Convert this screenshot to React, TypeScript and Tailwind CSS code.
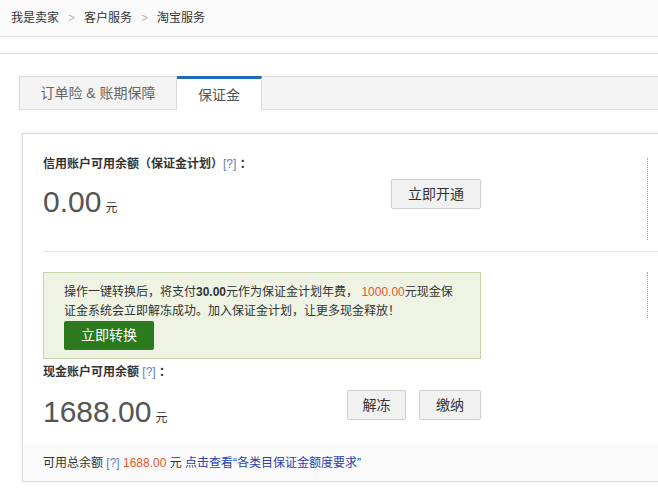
const FONT = "font-['Liberation_Sans','Noto_Sans_CJK_SC',sans-serif]";

const GrayButton = ({ label, width }: { label: string; width: string }) => (
  <button
    className={`${width} h-[30px] border border-[#cfcfcf] bg-[#f1f1f1] rounded-[2px] text-[14px] text-[#333] shadow-[0_0_2px_rgba(0,0,0,0.06)]`}
  >
    {label}
  </button>
);

const Help = () => <span className="text-[#5b82c2] font-normal">[?]</span>;

const App = () => {
  return (
    <div className={`w-[658px] h-[497px] overflow-hidden bg-white text-[#333] ${FONT}`}>
      {/* breadcrumb */}
      <div className="h-[37px] bg-[#fafafa] border-b border-[#e2e2e2] flex items-center pl-[11px] text-[12px]">
        <span>我是卖家</span>
        <span className="mx-[9px] text-[#bbb]">&gt;</span>
        <span>客户服务</span>
        <span className="mx-[9px] text-[#bbb]">&gt;</span>
        <span>淘宝服务</span>
      </div>
      <div className="h-[17px] border-b border-[#dcdcdc]" />

      <div className="w-[720px] pl-[19px] pt-[22px]">
        {/* tabs */}
        <div className="flex h-[34px] border border-[#dcdcdc] bg-[#f4f4f4]">
          <div className="w-[157px] border-r border-[#dcdcdc] flex items-center justify-center text-[14px] text-[#666]">
            订单险 &amp; 账期保障
          </div>
          <div className="w-[85px] -mt-[1px] h-[34px] border-t-[3px] border-t-[#1d6db6] border-r border-[#dcdcdc] bg-white flex items-center justify-center text-[14px] text-[#555] pt-[1px]">
            保证金
          </div>
        </div>

        {/* card */}
        <div className="ml-[3px] mt-[23px] border border-[#dcdcdc] bg-white shadow-[0_0_3px_rgba(0,0,0,0.1)]">
          {/* credit account */}
          <div className="flex h-[117px] pl-[20px] pt-[21px]">
            <div className="w-[438px] flex justify-between items-start">
              <div>
                <div className="text-[12px] leading-[18px] font-bold">
                  信用账户可用余额（保证金计划）<Help /> ：
                </div>
                <div className="mt-[14px] flex items-baseline">
                  <span className="text-[30px] leading-[30px] text-[#555]">0.00</span>
                  <span className="ml-[4px] text-[12px]">元</span>
                </div>
              </div>
              <div className="mt-[24px]">
                <GrayButton label="立即开通" width="w-[90px]" />
              </div>
            </div>
            <div className="ml-[166px] mt-[3px] h-[82px] border-l border-dotted border-[#aaa]" />
          </div>
          <div className="ml-[20px] border-t border-[#e6e6e6]" />

          {/* cash account */}
          <div className="flex pl-[20px] pt-[20px]">
            <div className="w-[438px]">
              <div className="border border-[#c9d3a8] bg-[#eef3e3] px-[20px] pt-[10px] pb-[8px]">
                <div className="text-[12px] leading-[19px] whitespace-nowrap">
                  <div>
                    操作一键转换后，将支付<b>30.00</b>元作为保证金计划年费， <span className="text-[#e8572b]">1000.00</span>元现金保
                  </div>
                  <div>证金系统会立即解冻成功。加入保证金计划，让更多现金释放！</div>
                </div>
                <button className="w-[90px] h-[29px] rounded-[2px] bg-[#2b7a1d] text-white text-[14px]">
                  立即转换
                </button>
              </div>
              <div className="flex justify-between items-start">
                <div>
                  <div className="mt-[4px] text-[12px] leading-[18px] font-bold">
                    现金账户可用余额 <Help /> ：
                  </div>
                  <div className="mt-[16px] flex items-baseline">
                    <span className="text-[30px] leading-[30px] text-[#555]">1688.00</span>
                    <span className="ml-[4px] text-[12px]">元</span>
                  </div>
                </div>
                <div className="mt-[31px] flex gap-[13px]">
                  <GrayButton label="解冻" width="w-[59px]" />
                  <GrayButton label="缴纳" width="w-[62px]" />
                </div>
              </div>
            </div>
            <div className="ml-[166px] h-[46px] border-l border-dotted border-[#aaa]" />
          </div>

          {/* total */}
          <div className="mt-[17px] h-[37px] bg-[#fafafa] flex items-center pl-[20px] text-[12px]">
            <span>可用总余额&nbsp;</span>
            <Help />
            <span className="text-[#e8572b]">&nbsp;1688.00&nbsp;</span>
            <span>元&nbsp;</span>
            <span className="text-[#2a3fae]">点击查看“各类目保证金额度要求”</span>
          </div>
        </div>
      </div>
    </div>
  );
};

export default App;
